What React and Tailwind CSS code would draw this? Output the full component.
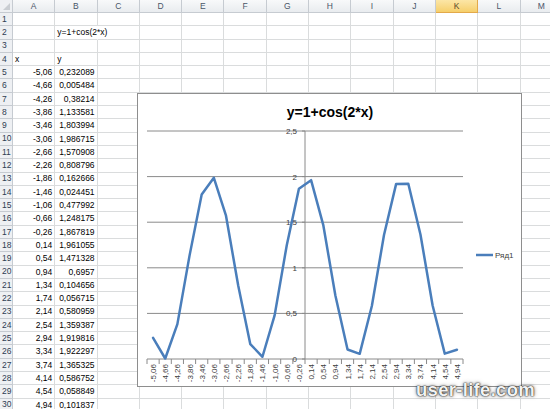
import React from "react";

const COLS = ["A", "B", "C", "D", "E", "F", "G", "H", "I", "J", "K", "L", "M"];
const XS = [];
for (let i = 0; i < 26; i++) XS.push(-5.06 + 0.4 * i);
const YS = [0.232089, 0.005484, 0.38214, 1.133581, 1.803994, 1.986715, 1.570908, 0.808796, 0.162666, 0.024451, 0.477992, 1.248175, 1.867819, 1.961055, 1.471328, 0.6957, 0.104656, 0.056715, 0.580959, 1.359387, 1.919816, 1.922297, 1.365325, 0.586752, 0.058849, 0.101837];
const fmt = (n) => {
  const s = (Math.round(n * 100) / 100).toFixed(2).replace(".", ",");
  return s === "-0,00" ? "0,00" : s;
};
const fmtY = (n) => String(n).replace(".", ",");

function cellContent(r, c) {
  if (r === 2 && c === 1) return { t: "y=1+cos(2*x)", align: "left", overflow: true };
  if (r === 4 && c === 0) return { t: "x", align: "left" };
  if (r === 4 && c === 1) return { t: "y", align: "left" };
  if (r >= 5 && r <= 30) {
    const i = r - 5;
    if (c === 0) return { t: fmt(XS[i]), align: "right" };
    if (c === 1) return { t: fmtY(YS[i]), align: "right" };
  }
  return null;
}

function Chart() {
  const x0 = 9;
  const x1 = 325;
  const cw = (x1 - x0) / 26;
  const yv = (v) => 265 - 91.2 * v;
  const pts = YS.map((v, i) => `${(x0 + cw * (i + 0.5)).toFixed(2)},${yv(v).toFixed(2)}`).join(" ");
  const axisX = x0 + 13 * cw;
  const grid = [0, 0.5, 1, 1.5, 2, 2.5];
  const glab = ["0", "0,5", "1", "1,5", "2", "2,5"];
  return (
    <div className="absolute left-[137px] top-[93px] w-[385px] h-[294px] bg-white border border-[#8E8E8E]">
      <svg width="383" height="292" className="block" style={{ fontFamily: '"Liberation Sans", Arial, sans-serif' }}>
        <text x="192" y="23" textAnchor="middle" fontSize="14" fontWeight="bold" fill="#000">y=1+cos(2*x)</text>
        {grid.map((g, i) => (
          <g key={g}>
            <line x1={x0} x2={x1} y1={yv(g)} y2={yv(g)} stroke="#8A8A8A" strokeWidth="1" />
            <line x1={axisX - 3} x2={axisX} y1={yv(g)} y2={yv(g)} stroke="#8A8A8A" strokeWidth="1" />
            <text x={axisX - 8} y={yv(g) + 3} textAnchor="end" fontSize="8" fill="#404040">{glab[i]}</text>
          </g>
        ))}
        <line x1={axisX} x2={axisX} y1={yv(2.5)} y2={yv(0)} stroke="#8A8A8A" strokeWidth="1" />
        {Array.from({ length: 27 }).map((_, i) => (
          <line key={i} x1={x0 + cw * i} x2={x0 + cw * i} y1={265} y2={270} stroke="#8A8A8A" strokeWidth="1" />
        ))}
        {XS.map((x, i) => {
          const cx = x0 + cw * (i + 0.5);
          return (
            <text key={i} transform={`translate(${cx + 3} 270) rotate(-90)`} textAnchor="end" fontSize="8" fill="#404040">{fmt(x)}</text>
          );
        })}
        <polyline points={pts} fill="none" stroke="#4A7EBB" strokeWidth="2.5" strokeLinejoin="round" strokeLinecap="round" />
        <line x1="338" x2="355" y1="161" y2="161" stroke="#4A7EBB" strokeWidth="2.5" />
        <text x="357" y="164" fontSize="8" fill="#404040">Ряд1</text>
      </svg>
    </div>
  );
}

export default function App() {
  const rows = [];
  for (let r = 1; r <= 30; r++) rows.push(r);
  return (
    <div className="relative w-[550px] h-[409px] overflow-hidden bg-white" style={{ fontFamily: '"Liberation Sans", Arial, sans-serif' }}>
      <div className="grid grid-cols-[13px_repeat(13,42.3px)] grid-rows-[13px_repeat(30,13.3px)]">
        <div className="relative bg-[#EEF0F3] border-r border-b border-[#C6CBD1]">
          <div className="absolute right-[2px] bottom-[2px] w-0 h-0 border-l-[7px] border-l-transparent border-b-[7px] border-b-[#C9CDD2]" />
        </div>
        {COLS.map((c) =>
          c === "K" ? (
            <div key={c} className="flex items-center justify-center bg-linear-to-b from-[#FCE6A6] to-[#F6CF6A] border-r border-b border-[#E3A94A] text-[8.5px] text-[#5A4A2A]">{c}</div>
          ) : (
            <div key={c} className="flex items-center justify-center bg-linear-to-b from-[#F8F9FA] to-[#E9ECEF] border-r border-b border-[#C6CBD1] text-[8.5px] text-[#4A5568]">{c}</div>
          )
        )}
        {rows.map((r) => (
          <React.Fragment key={r}>
            <div className="flex items-center pl-[2px] bg-[#EEF0F3] border-r border-b border-[#C6CBD1] text-[8.5px] text-[#2F3D52]">{r}</div>
            {COLS.map((c, ci) => {
              const cc = cellContent(r, ci);
              return (
                <div
                  key={c}
                  className={`flex items-center px-[2px] border-b border-[#DADCDD] text-[8.5px] leading-none text-black whitespace-nowrap ${cc && cc.overflow ? "border-r border-r-transparent overflow-visible z-10" : "border-r overflow-hidden"} ${cc && cc.align === "right" ? "justify-end" : "justify-start"}`}
                >
                  {cc ? cc.t : null}
                </div>
              );
            })}
          </React.Fragment>
        ))}
      </div>
      <Chart />
      <div className="absolute left-[416px] top-[381px] text-[18.5px] font-bold leading-none text-[#F2F2F2] tracking-[0.3px] [text-shadow:0_0_1px_rgba(0,0,0,0.9),0_0_2px_rgba(0,0,0,0.8),0_0_4px_rgba(0,0,0,0.5)]">user-life.com</div>
    </div>
  );
}
